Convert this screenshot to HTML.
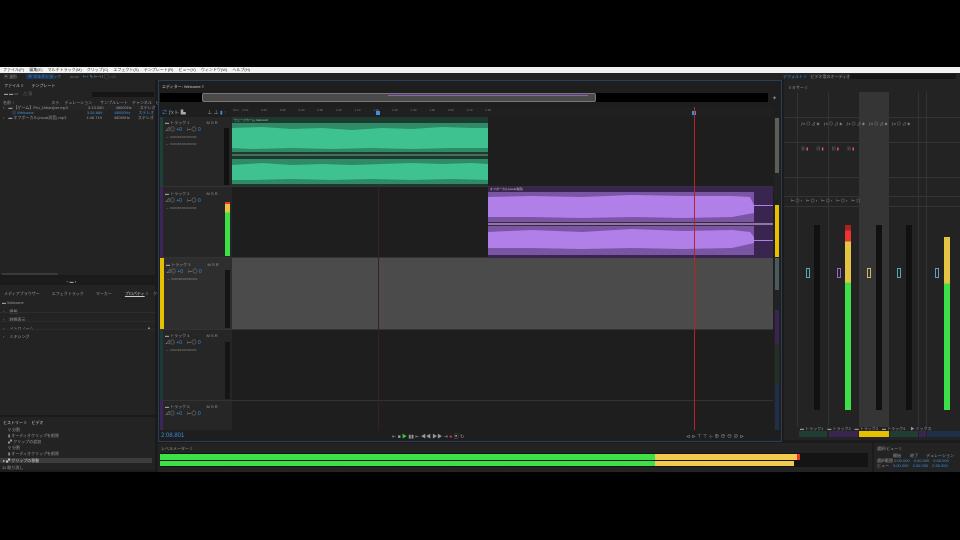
<!DOCTYPE html>
<html><head><meta charset="utf-8"><style>
*{margin:0;padding:0;box-sizing:border-box}
body{width:960px;height:540px;background:#000;position:relative;overflow:hidden;font-family:"Liberation Sans","Noto Sans CJK JP",sans-serif;font-size:4px;color:#aaa}
.a{position:absolute}
.t{position:absolute;font-size:4px;color:#9a9a9a;white-space:nowrap}
.bl{color:#3d8ee0}
</style></head><body>
<div class="a" style="left:0;top:67px;width:960px;height:6px;background:#f2f2f2"></div>
<div class="t" style="left:3px;top:67px;color:#333;font-size:4px">ファイル(F)　 編集(E)　 マルチトラック(M)　 クリップ(C)　 エフェクト(S)　 テンプレート(R)　 ビュー(V)　 ウィンドウ(W)　 ヘルプ(H)</div>
<div class="a" style="left:0;top:73px;width:960px;height:399px;background:#1b1b1b"></div>
<div class="a" style="left:0;top:73px;width:960px;height:7px;background:#232323"></div>
<div class="t" style="left:4px;top:74px">▣ 波形</div>
<div class="a" style="left:26px;top:74px;width:28px;height:5px;background:#1e3552"></div>
<div class="t bl" style="left:28px;top:74px">▣ マルチトラック</div>
<div class="t" style="left:70px;top:74px">▭ ▭　<span class="bl">⊢+</span> ✎ ⊢⊣ I ▢ ◌ ⁄ ⁄</div>
<div class="t bl" style="left:783px;top:74px">デフォルト ≡　<span style="color:#999">ビデオ用のオーディオを編集　　ラジオ制作　　 ≫　⌕ ヘルプを検索</span></div>
<div class="a" style="left:850px;top:74px;width:106px;height:5px;background:#151515"></div>

<div class="a" style="left:0;top:80px;width:155px;height:195px;background:#232323"></div>
<div class="t" style="left:4px;top:83px;color:#ccc">ファイル ≡　　テンプレート</div>
<div class="t" style="left:4px;top:91px">▬ ▬ ▭　 △ ▥</div>
<div class="a" style="left:92px;top:92px;width:62px;height:5px;background:#151515"></div>
<div class="t" style="left:3px;top:100px">名前 ↑　　　　　　　　　 ステ.　デュレーション　　サンプルレート　チャンネル　ビ</div>
<div class="a" style="left:2px;top:105px;width:153px;height:5px;background:#262626"></div>
<div class="t" style="left:3px;top:105px">›　▬ 【ゲーム】Pro_Urban[ver.mp3　　　　　3:13.080　　　48000Hz　　ステレオ</div>
<div class="t bl" style="left:12px;top:110px">▥ Welcome　　　　　　　　　　　　　 3:26.889　　　48000Hz　　ステレオ</div>
<div class="t" style="left:3px;top:115px">›　▬ オフボーカル(vocal消音).mp3　　　　　1:46.719　　　48000Hz　　ステレオ</div>
<div class="a" style="left:2px;top:273px;width:56px;height:2px;background:#3a3a3a"></div>
<div class="t" style="left:66px;top:279px">+ ▬ ◐</div>
<div class="a" style="left:0;top:285px;width:155px;height:130px;background:#232323"></div>
<div class="t" style="left:4px;top:291px">メディアブラウザー　　　エフェクトラック　　　マーカー　　　 <span style="color:#ccc;text-decoration:underline">プロパティ</span> ≡　 クリップエディター ≡　　　»</div>
<div class="t" style="left:2px;top:300px">▬ Welcome</div>
<div class="t" style="left:3px;top:309px">›　 情報</div>
<div class="t" style="left:3px;top:317px">›　 時間表示</div>
<div class="t" style="left:3px;top:326px">›　 メトロノーム</div>
<div class="t" style="left:3px;top:334px">›　 ミキシング</div>
<div class="t" style="left:147px;top:325px">▲</div>
<div class="a" style="left:0;top:312px;width:155px;height:1px;background:#2c2c2c"></div>
<div class="a" style="left:0;top:321px;width:155px;height:1px;background:#2c2c2c"></div>
<div class="a" style="left:0;top:329px;width:155px;height:1px;background:#2c2c2c"></div>
<div class="a" style="left:0;top:417px;width:155px;height:53px;background:#232323"></div>
<div class="t" style="left:3px;top:420px;color:#ccc">ヒストリー ≡　 ビデオ</div>
<div class="t" style="left:8px;top:427px">⚲ 分割<br>▮ オーディオクリップを削除<br>▞ クリップの追加<br>⚲ 分割<br>▮ オーディオクリップを削除</div>
<div class="a" style="left:0;top:458px;width:152px;height:5px;background:#3c3c3c"></div>
<div class="t" style="left:3px;top:458px;color:#ccc">▸ ▞ クリップの移動</div>
<div class="t" style="left:2px;top:465px">11 取り消し</div>

<div class="a" style="left:158px;top:80px;width:624px;height:362px;background:#1e1e1e;border:1px solid #2a3e5a"></div>
<div class="t" style="left:162px;top:84px;color:#ccc">エディター: Welcome ≡</div>
<div class="a" style="left:160px;top:93px;width:608px;height:9px;background:#000"></div>
<div class="a" style="left:202px;top:93px;width:394px;height:9px;background:#4a4a4a;border:1px solid #777;border-radius:2px"></div>
<div class="a" style="left:388px;top:95px;width:200px;height:1px;background:#8a5fc0"></div>
<div class="t" style="left:772px;top:95px;color:#888;font-size:6px">✦</div>
<div class="t bl" style="left:162px;top:109px;font-size:5px">⇄ <span style="color:#aaa">ƒx ⊩ ▙</span>　　　　 <span style="color:#aaa">⊥ ⊥</span> ▮ ↑</div>
<div class="a" style="left:232px;top:107px;width:541px;height:10px;background:#202020"></div>
<div class="t" style="left:233px;top:108px;color:#777;font-size:3px">hms　 0:10　　　　 0:20　　　　 0:30　　　　 0:40　　　　 0:50　　　　 1:00　　　　 1:10　　　　 1:20　　　　 1:30　　　　 1:40　　　　 1:50　　　　 2:00　　　　 2:10　　　　 2:20</div>
<div class="a" style="left:376px;top:111px;width:4px;height:4px;background:#3d8ee0"></div>
<div class="a" style="left:692px;top:111px;width:4px;height:4px;background:#3d8ee0"></div>

<div class="a" style="left:160px;top:117px;width:72px;height:313px;background:#262626"></div>
<div class="a" style="left:160px;top:117px;width:3px;height:70px;background:#1f4038"></div>
<div class="a" style="left:160px;top:187px;width:3px;height:71px;background:#3c2558"></div>
<div class="a" style="left:160px;top:258px;width:4px;height:72px;background:#e5c100"></div>
<div class="a" style="left:160px;top:330px;width:3px;height:71px;background:#1e3a36"></div>
<div class="a" style="left:160px;top:401px;width:3px;height:29px;background:#3c2558"></div>
<div class="a" style="left:160px;top:186px;width:613px;height:1px;background:#333"></div>
<div class="a" style="left:160px;top:257px;width:613px;height:1px;background:#333"></div>
<div class="a" style="left:160px;top:329px;width:613px;height:1px;background:#333"></div>
<div class="a" style="left:160px;top:400px;width:613px;height:1px;background:#333"></div>

<div class="t" style="left:165px;top:120px">▬ トラック 1　　　　 M S R</div>
<div class="t" style="left:165px;top:126px;font-size:5px">⊿◎ <span class="bl">+0</span>　⊢◎ <span class="bl">0</span></div>
<div class="t" style="left:165px;top:134px">→ ▭▭▭▭▭▭▭</div>
<div class="t" style="left:165px;top:141px">← ▭▭▭▭▭▭▭</div>
<div class="a" style="left:224px;top:128px;width:5px;height:57px;background:#111"></div>

<div class="t" style="left:165px;top:191px">▬ トラック 2　　　　 M S R</div>
<div class="t" style="left:165px;top:197px;font-size:5px">⊿◎ <span class="bl">+0</span>　⊢◎ <span class="bl">0</span></div>
<div class="t" style="left:165px;top:205px">→ ▭▭▭▭▭▭▭</div>
<div class="a" style="left:225px;top:202px;width:5px;height:54px;background:linear-gradient(#e33 0 4%,#e5c443 4% 19%,#3ee048 19%)"></div>

<div class="a" style="left:164px;top:258px;width:68px;height:71px;background:#2e2e2e"></div>
<div class="t" style="left:166px;top:262px">▬ トラック 3　　　　 M S R</div>
<div class="t" style="left:166px;top:268px;font-size:5px">⊿◎ <span class="bl">+0</span>　⊢◎ <span class="bl">0</span></div>
<div class="t" style="left:166px;top:276px">→ ▭▭▭▭▭▭▭</div>
<div class="a" style="left:225px;top:270px;width:5px;height:58px;background:#151515"></div>

<div class="t" style="left:165px;top:333px">▬ トラック 4　　　　 M S R</div>
<div class="t" style="left:165px;top:339px;font-size:5px">⊿◎ <span class="bl">+0</span>　⊢◎ <span class="bl">0</span></div>
<div class="t" style="left:165px;top:347px">→ ▭▭▭▭▭▭▭</div>
<div class="a" style="left:225px;top:342px;width:5px;height:57px;background:#151515"></div>
<div class="t" style="left:165px;top:404px">▬ トラック 5　　　　 M S R</div>
<div class="t" style="left:165px;top:410px;font-size:5px">⊿◎ <span class="bl">+0</span>　⊢◎ <span class="bl">0</span></div>

<div class="a" style="left:232px;top:258px;width:541px;height:71px;background:#4b4b4b"></div>
<div class="a" style="left:378px;top:117px;width:1px;height:313px;background:#3a2020"></div>
<svg class="a" style="left:232px;top:117px" width="541" height="142">
<rect x="0" y="0" width="256" height="69" fill="#1d3a30"/>
<text x="2" y="4" font-size="3" fill="#bbb">ウェーブカーム Cartoon2</text>
<rect x="0" y="6" width="256" height="29" fill="#2f8a68"/>
<polygon fill="#3ec28f" points="0,11 30,10 60,12 90,11 120,13 150,11 180,12 210,10 240,11 256,11 256,31 220,31 180,32 140,31 100,32 60,31 20,32 0,31"/>
<rect x="0" y="37" width="256" height="2" fill="#4a6a5e"/>
<rect x="0" y="42" width="256" height="25" fill="#2f8a68"/>
<polygon fill="#3ec28f" points="0,48 30,46 60,48 90,47 120,48 150,47 180,46 210,47 240,46 256,47 256,63 220,62 180,63 140,62 100,63 60,62 20,63 0,63"/>
<rect x="256" y="70" width="285" height="71" fill="#3a2450"/>
<text x="258" y="73" font-size="3" fill="#ccc">オフボーカル(vocal消音)</text>
<rect x="256" y="75" width="266" height="30" fill="#7a55a4"/>
<polygon fill="#b07fe8" points="256,80 300,79 350,80 400,78 450,79 500,79 518,80 522,88 522,96 500,100 450,101 400,100 350,101 300,100 256,100"/>
<rect x="256" y="106" width="285" height="2" fill="#8c7a9c"/>
<rect x="256" y="109" width="266" height="29" fill="#7a55a4"/>
<polygon fill="#b07fe8" points="256,115 300,113 350,115 400,112 450,114 500,113 518,115 522,120 522,126 500,131 450,132 400,131 350,132 300,131 256,131"/>
<rect x="521" y="88" width="20" height="1" fill="#b07fe8"/>
<rect x="521" y="123" width="20" height="1" fill="#b07fe8"/>
</svg>
<div class="a" style="left:694px;top:107px;width:1px;height:323px;background:#b22"></div>
<div class="a" style="left:774px;top:117px;width:6px;height:313px;background:#222"></div>
<div class="a" style="left:775px;top:118px;width:4px;height:55px;background:#586058"></div>
<div class="a" style="left:775px;top:205px;width:4px;height:52px;background:#e5c100"></div>
<div class="a" style="left:775px;top:258px;width:4px;height:32px;background:#4b5a5a"></div>
<div class="a" style="left:775px;top:310px;width:4px;height:35px;background:#3a2450"></div>
<div class="a" style="left:775px;top:345px;width:4px;height:40px;background:#223222"></div>
<div class="a" style="left:775px;top:385px;width:4px;height:45px;background:#1e3048"></div>

<div class="t bl" style="left:161px;top:433px;font-size:6px">2:08.801</div>
<div class="t" style="left:392px;top:433px;font-size:5px">⇤ ■ <span style="color:#3c3">▶</span> ▮▮ ⇤ ◀◀ ▶▶ ⇥ <span style="color:#e33">●</span> ▣ ↻</div>
<div class="t" style="left:686px;top:433px;font-size:5px">⊲ ⊳ ⊤ ⊤ ⊹ ⊕ ⊖ ⊖ ⊘ ⊳</div>

<div class="a" style="left:784px;top:80px;width:176px;height:360px;background:#232323"></div>
<div class="t" style="left:788px;top:85px">ミキサー ≡</div>
<div class="a" style="left:859px;top:92px;width:30px;height:335px;background:#353535"></div>
<div class="a" style="left:797px;top:92px;width:1px;height:335px;background:#333"></div>
<div class="a" style="left:828px;top:92px;width:1px;height:335px;background:#333"></div>
<div class="a" style="left:918px;top:92px;width:1px;height:335px;background:#333"></div>
<div class="a" style="left:926px;top:92px;width:1px;height:335px;background:#333"></div>
<div class="a" style="left:784px;top:117px;width:176px;height:1px;background:#333"></div>
<div class="a" style="left:784px;top:142px;width:176px;height:1px;background:#333"></div>
<div class="a" style="left:784px;top:177px;width:176px;height:1px;background:#333"></div>
<div class="a" style="left:784px;top:196px;width:176px;height:1px;background:#333"></div>
<div class="a" style="left:784px;top:206px;width:176px;height:1px;background:#333"></div>
<div class="t" style="left:801px;top:121px;font-size:4px">ƒx ◎ ⊿ ◈　ƒx ◎ ⊿ ◈　ƒx ◎ ⊿ ◈　ƒx ◎ ⊿ ◈　ƒx ◎ ⊿ ◈</div>
<div class="t" style="left:801px;top:146px;font-size:4px">▥ <span style="color:#e55">▮</span>　　▥ <span style="color:#e55">▮</span>　　▥ <span style="color:#e55">▮</span>　　▥ <span style="color:#e55">▮</span></div>
<div class="t" style="left:791px;top:198px;font-size:4px">⊢ ◎ <span class="bl">▪</span>　⊢ ◎ <span class="bl">▪</span>　⊢ ◎ <span class="bl">▪</span>　⊢ ◎ <span class="bl">▪</span>　⊢ ◎</div>
<div class="a" style="left:814px;top:225px;width:6px;height:185px;background:#111"></div>
<div class="a" style="left:845px;top:225px;width:6px;height:185px;background:linear-gradient(#a22 0 3%,#e33 3% 9%,#e5c443 9% 31%,#3ee048 31%)"></div>
<div class="a" style="left:876px;top:225px;width:6px;height:185px;background:#111"></div>
<div class="a" style="left:906px;top:225px;width:6px;height:185px;background:#111"></div>
<div class="a" style="left:944px;top:237px;width:6px;height:173px;background:linear-gradient(#e5c443 0 27%,#3ee048 27%)"></div>
<div class="a" style="left:806px;top:268px;width:4px;height:10px;border:1px solid #5aa"></div>
<div class="a" style="left:837px;top:268px;width:4px;height:10px;border:1px solid #96c"></div>
<div class="a" style="left:867px;top:268px;width:4px;height:10px;border:1px solid #cb6"></div>
<div class="a" style="left:897px;top:268px;width:4px;height:10px;border:1px solid #5aa"></div>
<div class="a" style="left:935px;top:268px;width:4px;height:10px;border:1px solid #69c"></div>
<div class="t" style="left:800px;top:426px">▬ トラック1　▬ トラック2　▬ トラック3　▬ トラック4　 ▶ ミックス</div>
<div class="a" style="left:799px;top:431px;width:28px;height:6px;background:#1f3d33"></div>
<div class="a" style="left:829px;top:431px;width:29px;height:6px;background:#3a2450"></div>
<div class="a" style="left:859px;top:431px;width:30px;height:6px;background:#e5c100"></div>
<div class="a" style="left:890px;top:431px;width:28px;height:6px;background:#1f3d33"></div>
<div class="a" style="left:919px;top:431px;width:7px;height:6px;background:#3a2450"></div>
<div class="a" style="left:927px;top:431px;width:33px;height:6px;background:#1e3048"></div>

<div class="a" style="left:158px;top:443px;width:714px;height:29px;background:#232323"></div>
<div class="t" style="left:161px;top:446px">レベルメーター ≡</div>
<div class="a" style="left:160px;top:453px;width:708px;height:14px;background:#141414"></div>
<div class="a" style="left:160px;top:454px;width:495px;height:6px;background:#3ee048"></div>
<div class="a" style="left:655px;top:454px;width:142px;height:6px;background:#f2ca4e"></div>
<div class="a" style="left:797px;top:454px;width:3px;height:6px;background:#e33"></div>
<div class="a" style="left:160px;top:461px;width:495px;height:5px;background:#3ee048"></div>
<div class="a" style="left:655px;top:461px;width:139px;height:5px;background:#f2ca4e"></div>
<div class="t" style="left:161px;top:467px;color:#666;font-size:3px;letter-spacing:6px">··············································································</div>
<div class="a" style="left:874px;top:443px;width:86px;height:29px;background:#232323"></div>
<div class="t" style="left:877px;top:446px">選択/ビュー ≡</div>
<div class="t" style="left:877px;top:453px;line-height:5px">　　　　開始　　 終了　　デュレーション<br>選択範囲 <span class="bl">0:00.000　0:00.000　0:00.000</span><br>ビュー　<span class="bl">0:00.000　2:30.000　2:30.000</span></div>
</body></html>
